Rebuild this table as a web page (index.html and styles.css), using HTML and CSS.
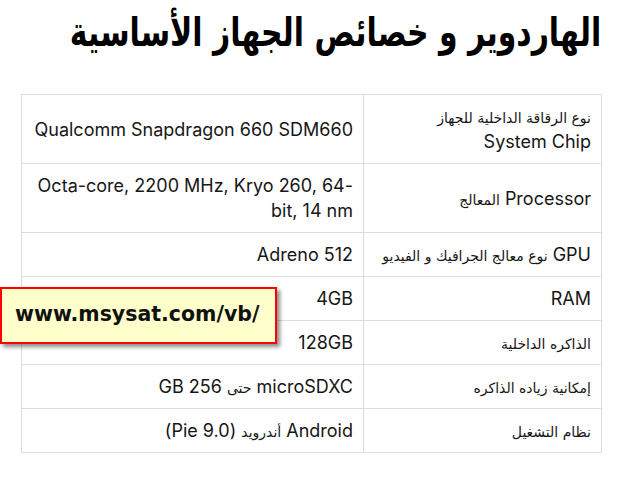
FILE: index.html
```html
<!DOCTYPE html>
<html lang="ar">
<head>
<meta charset="utf-8">
<title>الهاردوير و خصائص الجهاز الأساسية</title>
<link rel="stylesheet" href="styles.css">
</head>
<body>
<div class="page">
  <div class="title-row">
    <h1 class="title" dir="rtl">الهاردوير و خصائص الجهاز الأساسية</h1>
  </div>
  <table class="specs" dir="rtl">
    <tr>
      <td class="label"><span class="ar">نوع الرقاقة الداخلية للجهاز</span><br>System Chip</td>
      <td class="value">Qualcomm Snapdragon 660 SDM660</td>
    </tr>
    <tr>
      <td class="label">Processor <span class="ar">المعالج</span></td>
      <td class="value">Octa-core, 2200 MHz, Kryo 260, 64-bit, 14 nm</td>
    </tr>
    <tr>
      <td class="label">GPU <span class="ar">نوع معالج الجرافيك و الفيديو</span></td>
      <td class="value">Adreno 512</td>
    </tr>
    <tr>
      <td class="label">RAM</td>
      <td class="value">4GB</td>
    </tr>
    <tr>
      <td class="label"><span class="ar">الذاكره الداخلية</span></td>
      <td class="value">128GB</td>
    </tr>
    <tr>
      <td class="label"><span class="ar">إمكانية زياده الذاكره</span></td>
      <td class="value">microSDXC <span class="ar">حتى</span> 256 GB</td>
    </tr>
    <tr>
      <td class="label"><span class="ar">نظام التشغيل</span></td>
      <td class="value">Android <span class="ar">أندرويد</span> (9.0 Pie)</td>
    </tr>
  </table>
  <div class="watermark">www.msysat.com/vb/</div>
</div>
</body>
</html>
```
FILE: styles.css
```css
html, body {
  margin: 0;
  padding: 0;
  background: #ffffff;
}
.page {
  position: relative;
  width: 580px;
  margin-left: 21px;
  font-family: Inter, "DejaVu Sans", sans-serif;
  color: #161616;
}
.title-row {
  height: 94px;
  display: flex;
  justify-content: flex-end;
  align-items: flex-start;
}
.title {
  margin: 0;
  padding-top: 4px;
  font-family: "DejaVu Sans Condensed", "DejaVu Sans", sans-serif;
  font-weight: bold;
  font-size: 40px;
  line-height: 56px;
  white-space: nowrap;
  color: #000;
  transform: scaleX(0.83);
  transform-origin: right center;
}
.specs {
  width: 580px;
  border-collapse: collapse;
  font-size: 18px;
  line-height: 25px;
  table-layout: fixed;
}
.specs td {
  border: 1px solid #dcdcdc;
  padding: 9px 10px;
  text-align: right;
  vertical-align: middle;
}
.label {
  width: 217px;
}
.value {
  width: 321px;
}
.ar {
  font-family: "DejaVu Sans", sans-serif;
  font-size: 14px;
  line-height: 20px;
}
.watermark {
  position: absolute;
  left: -21px;
  top: 287px;
  width: 277px;
  height: 57px;
  box-sizing: border-box;
  border: 2px solid #ff0000;
  background: #ffffcc;
  box-shadow: 3px 3px 4px rgba(0, 0, 0, 0.45);
  font-family: "DejaVu Sans", Verdana, sans-serif;
  font-weight: bold;
  font-size: 20.5px;
  line-height: 50px;
  padding-left: 13px;
  color: #111;
  text-align: left;
}
```
